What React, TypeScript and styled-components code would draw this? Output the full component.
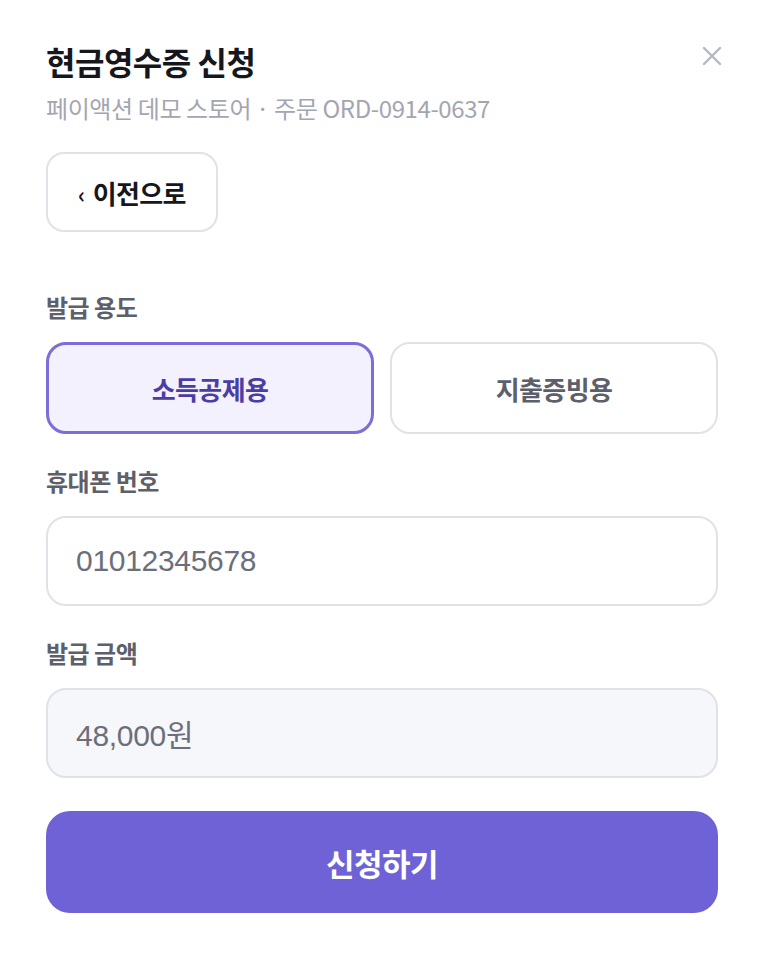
import { useState } from 'react'
import styled, { createGlobalStyle } from 'styled-components'

const GlobalStyle = createGlobalStyle`
  html, body {
    margin: 0;
    padding: 0;
    background: #fff;
  }
  body {
    font-family: 'Noto Sans CJK KR', 'Noto Sans', 'Liberation Sans', sans-serif;
    -webkit-font-smoothing: antialiased;
  }
  * {
    box-sizing: border-box;
  }
`

const Sheet = styled.section`
  width: 762px;
  padding: 38px 44px 40px 46px;
  display: flex;
  flex-direction: column;
`

const Header = styled.header`
  display: flex;
  align-items: flex-start;
  justify-content: space-between;
`

const TitleBlock = styled.div`
  display: flex;
  flex-direction: column;
`

const Title = styled.h1`
  margin: 0;
  font-size: 32px;
  line-height: 46px;
  font-weight: 700;
  color: #16171c;
  letter-spacing: -0.5px;
`

const Subtitle = styled.p`
  margin: 4px 0 0;
  font-size: 24px;
  line-height: 40px;
  color: #a3a6b0;
  letter-spacing: -0.4px;
`

const CloseButton = styled.button`
  margin: 6px -6px 0 0;
  padding: 0;
  width: 24px;
  height: 24px;
  border: none;
  background: none;
  display: flex;
  align-items: center;
  justify-content: center;
  cursor: pointer;
`

const BackButton = styled.button`
  margin-top: 24px;
  align-self: flex-start;
  width: 172px;
  height: 80px;
  border: 2px solid #e1e2e8;
  border-radius: 18px;
  background: #fff;
  font-family: inherit;
  font-size: 26px;
  font-weight: 700;
  color: #16171c;
  letter-spacing: -0.6px;
  display: flex;
  align-items: center;
  justify-content: center;
  gap: 8px;
  cursor: pointer;
`

const Chevron = styled.span`
  font-size: 22px;
  font-weight: 700;
  line-height: 1;
  margin-top: 2px;
`

const Field = styled.div<{ $gap?: number }>`
  display: flex;
  flex-direction: column;
  margin-top: ${(p) => p.$gap ?? 0}px;
`

const Label = styled.label`
  font-size: 24px;
  line-height: 32px;
  font-weight: 700;
  color: #5d606b;
  letter-spacing: -0.5px;
  margin-bottom: 19px;
`

const OptionRow = styled.div`
  display: grid;
  grid-template-columns: 1fr 1fr;
  gap: 16px;
`

const Option = styled.button<{ $active?: boolean }>`
  height: 92px;
  border-radius: 20px;
  border: ${(p) => (p.$active ? '3px solid #7b6ddc' : '2px solid #e1e2e8')};
  background: ${(p) => (p.$active ? '#f3f1fe' : '#fff')};
  color: ${(p) => (p.$active ? '#4a3da3' : '#5d606b')};
  font-family: inherit;
  font-size: 26px;
  font-weight: 700;
  letter-spacing: -0.6px;
  cursor: pointer;
`

const Input = styled.input<{ $readOnly?: boolean }>`
  display: block;
  height: 90px;
  width: 100%;
  padding: 0 28px;
  border: 2px solid #e1e2e8;
  border-radius: 20px;
  background: ${(p) => (p.$readOnly ? '#f6f7fb' : '#fff')};
  font-family: 'Liberation Sans', 'Noto Sans CJK KR', sans-serif;
  font-size: 30px;
  color: #6c6f7a;
  letter-spacing: -0.3px;
  outline: none;
  &::placeholder {
    color: #6c6f7a;
  }
`

const SubmitButton = styled.button`
  margin-top: 33px;
  height: 102px;
  width: 100%;
  border: none;
  border-radius: 24px;
  background: #6e62d6;
  color: #fff;
  font-family: inherit;
  font-size: 31px;
  font-weight: 700;
  letter-spacing: -0.5px;
  cursor: pointer;
`

const purposes = ['소득공제용', '지출증빙용']

const App = () => {
  const [purpose, setPurpose] = useState(purposes[0])
  const [phone, setPhone] = useState('')
  return (
    <>
      <GlobalStyle />
      <Sheet>
        <Header>
          <TitleBlock>
            <Title>현금영수증 신청</Title>
            <Subtitle>페이액션 데모 스토어 · 주문 ORD-0914-0637</Subtitle>
          </TitleBlock>
          <CloseButton aria-label="닫기">
            <svg width="20" height="20" viewBox="0 0 20 20">
              <path
                d="M2 2L18 18M18 2L2 18"
                stroke="#b5b7c1"
                strokeWidth="2.4"
                strokeLinecap="round"
              />
            </svg>
          </CloseButton>
        </Header>
        <BackButton>
          <Chevron>‹</Chevron>
          이전으로
        </BackButton>
        <Field $gap={59}>
          <Label>발급 용도</Label>
          <OptionRow>
            {purposes.map((item) => (
              <Option
                key={item}
                $active={purpose === item}
                onClick={() => setPurpose(item)}
              >
                {item}
              </Option>
            ))}
          </OptionRow>
        </Field>
        <Field $gap={31}>
          <Label>휴대폰 번호</Label>
          <Input
            placeholder="01012345678"
            value={phone}
            onChange={(e) => setPhone(e.target.value)}
          />
        </Field>
        <Field $gap={31}>
          <Label>발급 금액</Label>
          <Input $readOnly readOnly value="48,000원" />
        </Field>
        <SubmitButton>신청하기</SubmitButton>
      </Sheet>
    </>
  )
}

export default App
